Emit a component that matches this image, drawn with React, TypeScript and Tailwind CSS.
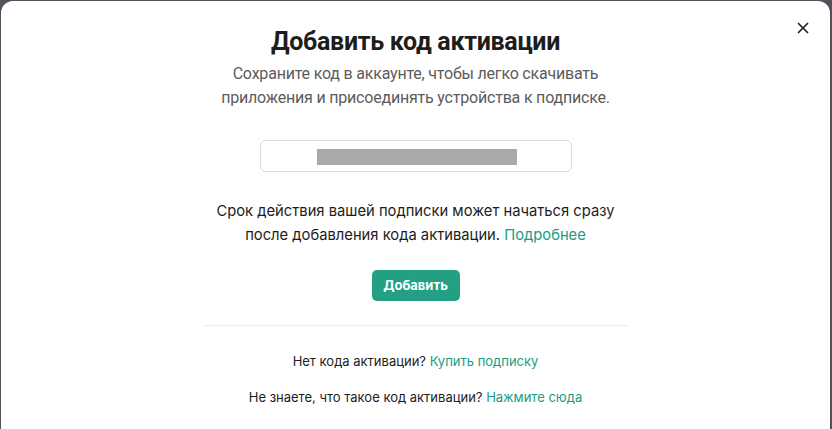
import React from "react";

export default function App() {
  return (
    <div className="w-[832px] h-[429px] bg-[#50535a] pt-px pl-px pr-[2px] overflow-hidden">
      <div className="relative h-[440px] bg-white rounded-[12px] flex flex-col items-center" style={{ fontFamily: "Inter, 'Noto Sans', sans-serif" }}>
        <button className="absolute right-[20px] top-[20px] w-[14px] h-[14px] flex items-center justify-center text-[#1d1d1b]">
          <svg width="12" height="12" viewBox="0 0 12 12" fill="none" stroke="currentColor" strokeWidth="1.6">
            <path d="M1 1L11 11M11 1L1 11" />
          </svg>
        </button>
        <h1 className="mt-[25px] text-[25px] leading-[32px] font-bold text-[#1d1d1b] tracking-[-0.3px]" style={{ fontFamily: "Roboto, sans-serif" }}>
          Добавить код активации
        </h1>
        <p className="mt-[4px] text-[16px] leading-[24px] text-[#5c5c5c] text-center" style={{ fontFamily: "Roboto, sans-serif", letterSpacing: "-0.2px" }}>
          Сохраните код в аккаунте, чтобы легко скачивать
          <br />
          приложения и присоединять устройства к подписке.
        </p>
        <div className="mt-[30px] w-[312px] h-[32px] border border-[#dcdcdc] rounded-[6px] flex items-center pl-[56px] pt-[1px]">
          <div className="w-[200px] h-[16px] bg-[#a9a9a9]" />
        </div>
        <p className="mt-[27px] text-[14.75px] leading-[24px] text-[#1d1d1b] text-center">
          Срок действия вашей подписки может начаться сразу
          <br />
          после добавления кода активации. <span className="text-[#1a9b83]">Подробнее</span>
        </p>
        <button className="mt-[23px] w-[88px] h-[31px] rounded-[5px] bg-[#23a083] text-white text-[13px] font-bold">
          Добавить
        </button>
        <div className="mt-[24px] w-[424px] h-px bg-[#ececec]" />
        <p className="mt-[25px] text-[13px] leading-[20px] text-[#1d1d1b]">
          Нет кода активации? <span className="text-[#1a9b83]">Купить подписку</span>
        </p>
        <p className="mt-[16px] text-[13px] leading-[20px] text-[#1d1d1b]">
          Не знаете, что такое код активации? <span className="text-[#1a9b83]">Нажмите сюда</span>
        </p>
      </div>
    </div>
  );
}
